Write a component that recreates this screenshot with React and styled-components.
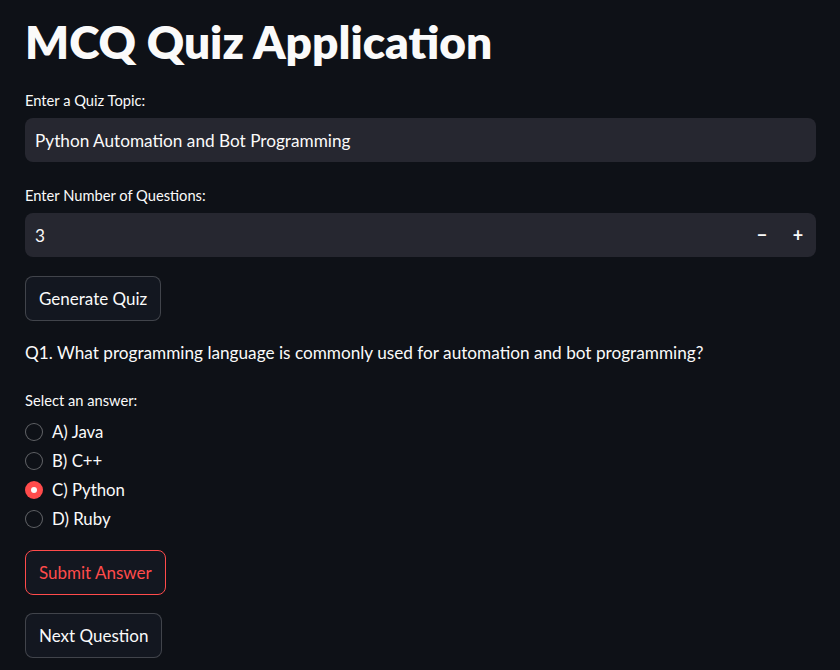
import React, { useState } from 'react'
import styled, { createGlobalStyle } from 'styled-components'

const GlobalStyle = createGlobalStyle`
    html, body {
        margin: 0;
        padding: 0;
        background: #0e1117;
    }
    body {
        font-family: Lato, "Noto Sans", sans-serif;
        color: #fafafa;
    }
`;

const Page = styled.div`
    min-height: 670px;
    background: #0e1117;
    padding: 0 24px 0 25px;
    box-sizing: border-box;
`;
const Title = styled.h1`
    margin: 0;
    padding: 14px 0 20px;
    font-size: 46px;
    font-weight: 800;
    line-height: 56px;
    color: #fafafa;
`;
const Field = styled.div`
    display: flex;
    flex-direction: column;
    margin-bottom: ${({ $gap }) => $gap || 23}px;
`;
const Label = styled.label`
    font-size: 14.7px;
    line-height: 20px;
    margin-bottom: ${({ $gap }) => ($gap === undefined ? 8 : $gap)}px;
    color: #fafafa;
`;
const InputBox = styled.div`
    display: flex;
    align-items: center;
    height: 44px;
    background: #262730;
    border-radius: 8px;
    padding: 0 ${({ $steps }) => ($steps ? 0 : 10)}px 0 10px;
    box-sizing: border-box;
`;
const Input = styled.input`
    flex: 1;
    min-width: 0;
    background: transparent;
    border: none;
    outline: none;
    color: #fafafa;
    font-family: inherit;
    font-size: 17.2px;
    padding: 0;
`;
const StepButton = styled.button`
    width: 36px;
    height: 100%;
    background: transparent;
    border: none;
    color: #fafafa;
    font-family: inherit;
    font-size: 18px;
    font-weight: 700;
    cursor: pointer;
    padding: 0;
`;
const Button = styled.button`
    align-self: flex-start;
    height: 45px;
    padding: 0 13px;
    background: #131720;
    border: 1px solid ${({ $primary }) => ($primary ? '#ff4b4b' : 'rgba(250, 250, 250, 0.2)')};
    border-radius: 8px;
    color: ${({ $primary }) => ($primary ? '#ff4b4b' : '#fafafa')};
    font-family: inherit;
    font-size: 17px;
    cursor: pointer;
    margin-bottom: ${({ $gap }) => $gap || 0}px;
`;
const Column = styled.div`
    display: flex;
    flex-direction: column;
`;
const Question = styled.p`
    margin: 20px 0 25px;
    font-size: 17.2px;
    line-height: 24px;
`;
const RadioGroup = styled.div`
    display: flex;
    flex-direction: column;
    margin-bottom: 17px;
`;
const Option = styled.label`
    display: flex;
    align-items: center;
    height: 29px;
    gap: 9px;
    font-size: 16.8px;
    cursor: pointer;
`;
const Dot = styled.span`
    width: 18px;
    height: 18px;
    border-radius: 50%;
    box-sizing: border-box;
    display: flex;
    align-items: center;
    justify-content: center;
    background: ${({ $on }) => ($on ? '#ff4b4b' : '#0e1117')};
    border: ${({ $on }) => ($on ? 'none' : '1px solid rgba(250, 250, 250, 0.35)')};
    &::after {
        content: '';
        display: ${({ $on }) => ($on ? 'block' : 'none')};
        width: 6px;
        height: 6px;
        border-radius: 50%;
        background: #fafafa;
    }
`;

const options = ['A) Java', 'B) C++', 'C) Python', 'D) Ruby'];

const App = () => {
    const [topic, setTopic] = useState('Python Automation and Bot Programming');
    const [count, setCount] = useState(3);
    const [answer, setAnswer] = useState(2);

    return (
        <Page>
            <GlobalStyle />
            <Title>MCQ Quiz Application</Title>
            <Field>
                <Label>Enter a Quiz Topic:</Label>
                <InputBox>
                    <Input value={topic} onChange={(e) => setTopic(e.target.value)} />
                </InputBox>
            </Field>
            <Field $gap={19}>
                <Label>Enter Number of Questions:</Label>
                <InputBox $steps>
                    <Input value={count} onChange={(e) => setCount(e.target.value)} />
                    <StepButton onClick={() => setCount(Math.max(1, count - 1))}>−</StepButton>
                    <StepButton onClick={() => setCount(count + 1)}>+</StepButton>
                </InputBox>
            </Field>
            <Column>
                <Button>Generate Quiz</Button>
                <Question>Q1. What programming language is commonly used for automation and bot programming?</Question>
                <Label $gap={7}>Select an answer:</Label>
                <RadioGroup>
                    {options.map((o, i) => (
                        <Option key={o} onClick={() => setAnswer(i)}>
                            <Dot $on={answer === i} />
                            {o}
                        </Option>
                    ))}
                </RadioGroup>
                <Button $primary $gap={18}>Submit Answer</Button>
                <Button>Next Question</Button>
            </Column>
        </Page>
    )
}

export default App
